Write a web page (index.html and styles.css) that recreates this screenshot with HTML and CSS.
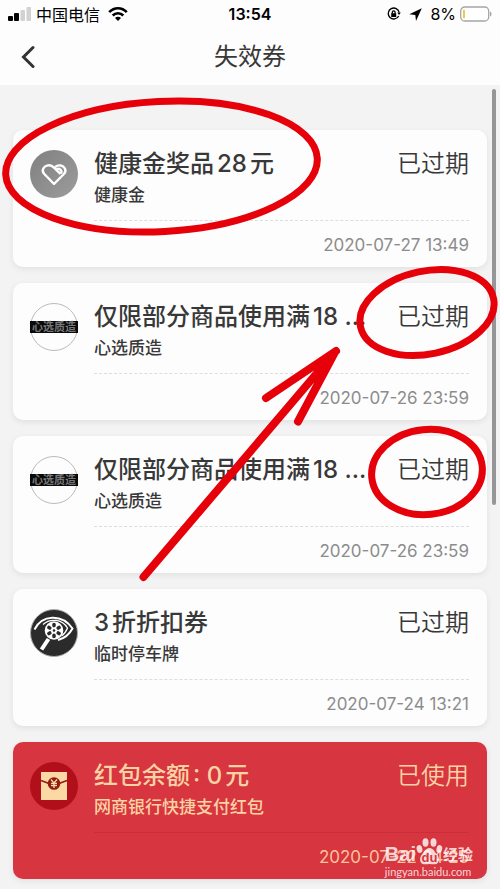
FILE: index.html
```html
<!DOCTYPE html>
<html lang="zh-CN">
<head>
<meta charset="utf-8">
<meta name="viewport" content="width=device-width, initial-scale=1">
<title>失效券</title>
<link rel="stylesheet" href="styles.css">
</head>
<body>
<div class="screen">
  <header class="top">
    <div class="status">
      <div class="status-left">
        <svg width="24" height="16" viewBox="0 0 24 16" aria-hidden="true"><rect x="0" y="10" width="5" height="5" rx="1"/><rect x="6" y="7" width="5" height="8" rx="1"/><g fill="#d2d2d2"><rect x="12.500" y="4" width="4.500" height="11" rx="1"/><rect x="18.500" y="1" width="4.500" height="14" rx="1"/></g></svg>
        <span>中国电信</span>
        <svg class="wifi" width="20" height="16" viewBox="0 0 20 16" fill="none" stroke="#000" stroke-width="2.600" aria-hidden="true"><path d="M1.200 6.200C6.200 1 13.800 1 18.800 6.200"/><path d="M4.700 9.500c3-3 7.600-3 10.600 0"/><path d="M10 15l-3-3.100c1.800-1.700 4.200-1.700 6 0z" fill="#000" stroke="none"/></svg>
      </div>
      <time class="clock">13:54</time>
      <div class="status-right">
        <svg width="14" height="14" viewBox="0 0 14 14" fill="none" stroke="#000" stroke-width="1.300" aria-hidden="true"><path d="M11.700 9A5.500 5.500 0 1 1 12.200 5.500"/><path d="M10.300 5.500h3.500L12 8z" fill="#000" stroke="none"/><rect x="4.200" y="6.200" width="5" height="3.800" fill="#000" stroke="none"/><path d="M5.300 6.500V5.200a1.400 1.400 0 0 1 2.800 0v1.300"/></svg>
        <svg class="arrow-icon" width="13" height="13" viewBox="0 0 13 13" aria-hidden="true"><path d="M12.800.2L.3 6.200l6 .7.7 6z"/></svg>
        <span>8%</span>
        <svg width="32" height="16" viewBox="0 0 32 16" aria-hidden="true"><rect x=".7" y="1" width="28" height="14" rx="4" fill="#fff" stroke="#a5a5a5" stroke-width="1.300"/><rect x="3" y="3.500" width="2" height="9" rx="1" fill="#f2c64f"/><path d="M30 5.500c2 .8 2 4.200 0 5z" fill="#a5a5a5"/></svg>
      </div>
    </div>
    <div class="nav">
      <button class="back" type="button" aria-label="返回"><svg width="14" height="24" viewBox="0 0 14 24" fill="none" stroke="#333" stroke-width="3" stroke-linecap="round"><path d="M12 2.500L2.500 12 12 21.500"/></svg></button>
      <h1>失效券</h1>
    </div>
  </header>

  <main class="list">
    <article class="card">
      <svg class="logo" width="48" height="48" viewBox="0 0 48 48" aria-hidden="true"><defs><linearGradient id="silver" x1="0" y1="0" x2="1" y2="1"><stop offset="0" stop-color="#808080"/><stop offset="1" stop-color="#9c9c9c"/></linearGradient></defs><circle cx="24" cy="24" r="24" fill="url(#silver)"/><g fill="none" stroke="#fff" stroke-width="2.400" stroke-linejoin="round"><path d="M30.500 24L24 17.600C20 13.500 15 15.500 13.300 18.500c-1 2-.5 4 1 5.500L24 34l9.900-10c1.500-1.500 2-3.500 1-5.500-1.700-3-6.200-4.500-9.700-1.500"/><path d="M26.500 19.500c3-2 6 1 4.500 4"/></g></svg>
      <div class="body">
        <div class="line"><h2>健康金奖品28元</h2><span class="state">已过期</span></div>
        <p>健康金</p>
        <time class="date">2020-07-27 13:49</time>
      </div>
    </article>
    <article class="card">
      <div class="logo brand"><span>心选质造</span></div>
      <div class="body">
        <div class="line"><h2>仅限部分商品使用满18 ...</h2><span class="state">已过期</span></div>
        <p>心选质造</p>
        <time class="date">2020-07-26 23:59</time>
      </div>
    </article>
    <article class="card">
      <div class="logo brand"><span>心选质造</span></div>
      <div class="body">
        <div class="line"><h2>仅限部分商品使用满18 ...</h2><span class="state">已过期</span></div>
        <p>心选质造</p>
        <time class="date">2020-07-26 23:59</time>
      </div>
    </article>
    <article class="card">
      <svg class="logo" width="48" height="48" viewBox="0 0 48 48" aria-hidden="true"><circle cx="24" cy="24" r="23.500" fill="#2b2b2b" stroke="#aaa"/><g fill="none" stroke="#fff"><path d="M4.500 20.500C12 5.500 32 4.500 42.500 19.500 39 26 34 29.500 28 31" stroke-width="2"/><path d="M13 15.500C20 9 32 10 37.500 19c-1.500 4-3 6-6 8" stroke-width="1.300"/><path d="M18.500 30L11.500 40.500" stroke-width="4"/></g><circle cx="24" cy="21.500" r="9.300" fill="#fff"/><g stroke="#2b2b2b" stroke-width="3.600" stroke-linecap="round"><path d="M24 15.600v1M29.100 18.500l-.9.500M29.100 24.500l-.9-.5M24 27.400v-1M18.900 24.500l.9-.5M18.900 18.500l.9.500"/></g><circle cx="24" cy="21.500" r="1.300" fill="#2b2b2b"/></svg>
      <div class="body">
        <div class="line"><h2>3折折扣券</h2><span class="state">已过期</span></div>
        <p>临时停车牌</p>
        <time class="date">2020-07-24 13:21</time>
      </div>
    </article>
    <article class="card red">
      <svg class="logo" width="48" height="48" viewBox="0 0 48 48" aria-hidden="true"><circle cx="24" cy="24" r="24" fill="#b10f19"/><path d="M11 10h26v28H11z" fill="#fcd8a4"/><path d="M11 18.500l8 3M37 18.500l-8 3" fill="none" stroke="#8c1d12" stroke-width="1.500"/><circle cx="24" cy="21.500" r="6.300" fill="#8c1d12"/><path d="M21 17.500l3 3.500 3-3.500M24 21v5M21 21.500h6M21 23.700h6" fill="none" stroke="#fcd8a4" stroke-width="1.300"/></svg>
      <div class="body">
        <div class="line"><h2>红包余额: 0元</h2><span class="state">已使用</span></div>
        <p>网商银行快捷支付红包</p>
        <time class="date">2020-07-22 04:25</time>
      </div>
    </article>
  </main>

  <div class="scrollbar"></div>
  <svg class="marks" width="500" height="889" viewBox="0 0 500 889" fill="none" stroke="#e60009" stroke-width="7" stroke-linecap="round" aria-hidden="true">
    <ellipse cx="161.500" cy="166.500" rx="156" ry="65" transform="rotate(-3 161.500 166.500)"/>
    <ellipse cx="427" cy="312.500" rx="68" ry="41.500" transform="rotate(-12 427 312.500)"/>
    <ellipse cx="427" cy="472" rx="55.500" ry="42.500" transform="rotate(-6 427 472)"/>
    <path d="M143.500 577L335 352M266 398l70-47M298 421.500l37-69.500" stroke-width="8"/>
  </svg>
  <div class="watermark">
    <div class="wm-row"><b>Bai</b><span class="paw"><svg width="27" height="27" viewBox="0 0 27 27" fill="currentColor" aria-hidden="true"><ellipse cx="9.500" cy="4.500" rx="3" ry="4.200"/><ellipse cx="17.500" cy="4.500" rx="3" ry="4.200"/><ellipse cx="3.500" cy="11" rx="2.800" ry="4" transform="rotate(-15 3.500 11)"/><ellipse cx="23.300" cy="11" rx="2.800" ry="4" transform="rotate(15 23.300 11)"/><path d="M13.500 10c4 0 5 4 7.500 6.500 3 3 2.500 9.500-2 9.800-2 .1-3.500-.3-5.500-.3s-3.500.4-5.500.3C3.500 26 3 19.500 6 16.500 8.500 14 9.500 10 13.500 10z"/></svg><i>du</i></span><strong>经验</strong></div>
    <div class="wm-url">jingyan.baidu.com</div>
  </div>
</div>
</body>
</html>
```
FILE: styles.css
```css
* { box-sizing: border-box; }
body, h1, h2, p { margin: 0; }
body {
  background: #f3f3f3;
  color: #383838;
  font-family: Inter, "Noto Sans CJK SC", sans-serif;
  text-autospace: normal;
}
.screen { position: relative; overflow: hidden; min-height: 100vh; padding-bottom: 10px; }

.top { background: #fdfdfd; padding-bottom: 8px; }
.status {
  display: grid;
  grid-template-columns: 1fr auto 1fr;
  align-items: center;
  height: 28px;
  padding: 0 8px;
  color: #000;
  font-size: 16px;
}
.status-left, .status-right { display: flex; align-items: center; gap: 4px; }
.status-right { justify-content: flex-end; }
.wifi { margin-left: 4px; }
.arrow-icon { margin: 0 4px; }
.clock { font-weight: 600; }
.nav {
  display: grid;
  grid-template-columns: 40px 1fr 40px;
  align-items: center;
  height: 49px;
  padding: 9px 10px 0;
}
.back { display: flex; justify-content: center; padding: 0; margin: 0; width: 36px; border: 0; background: none; }
h1 { text-align: center; font-size: 24px; line-height: 32px; font-weight: 400; }

.list { display: grid; gap: 16px; padding: 45px 13px 0; }
.card {
  display: flex;
  gap: 16px;
  padding: 16px 18px 9px 17px;
  border-radius: 10px;
  background: #fdfdfd;
  box-shadow: 0 2px 6px rgba(0, 0, 0, 0.08);
}
.logo { flex: none; width: 48px; height: 48px; margin-top: 4px; }
.brand {
  display: flex;
  align-items: center;
  justify-content: center;
  border: 1px solid #bbb;
  border-radius: 50%;
}
.brand span {
  flex: none;
  width: 48px;
  background: #0a0a0a;
  color: #777;
  font-size: 11px;
  font-weight: 700;
  line-height: 12px;
  text-align: center;
}
.body { flex: 1; min-width: 0; }
.line { display: flex; justify-content: space-between; line-height: 36px; }
h2 { font-size: 24px; font-weight: 500; white-space: nowrap; }
.state { font-size: 24px; font-weight: 350; white-space: nowrap; }
p { font-size: 17px; line-height: 26px; font-weight: 500; }
.date {
  display: block;
  margin-top: 12px;
  padding-top: 11px;
  border-top: 1px dashed #ddd;
  color: #8c8c8c;
  font-size: 17px;
  line-height: 26px;
  text-align: right;
}
.red { background: #d7353f; color: #fbd2a4; }
.red .date { border-top: 1px solid #c92f39; color: #fbc49a; }

.scrollbar { position: absolute; top: 89px; right: 4px; width: 4px; height: 416px; border-radius: 2px; background: #969698; }
.marks { position: absolute; top: 0; left: 0; }
.watermark {
  position: absolute;
  right: 27px;
  bottom: 10px;
  color: rgba(255, 255, 255, 0.8);
  font-family: Lato, "Noto Sans CJK SC", sans-serif;
}
.wm-row { display: flex; align-items: flex-end; font-size: 20px; line-height: 22px; }
.wm-row b { font-family: "Liberation Sans", sans-serif; }
.wm-row strong { font-size: 15px; font-weight: 700; }
.paw { position: relative; display: flex; }
.paw i { position: absolute; left: 0; right: 0; bottom: 0; text-align: center; color: #d7353f; font: 700 13px/14px "Liberation Sans", sans-serif; }
.wm-url { font-size: 11px; line-height: 14px; }
```
